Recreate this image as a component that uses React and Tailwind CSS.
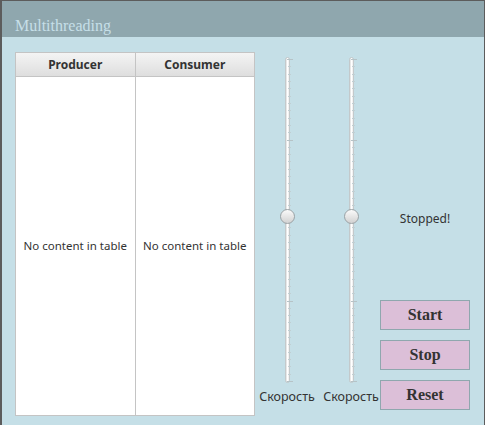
import React from "react";

const TRACK_H = 326;

function Ticks() {
  const marks = [];
  const major = 80.5;
  for (let m = 0; m < 4; m++) {
    for (let i = 0; i < 11; i++) {
      const y = 2 + m * major + (i * major) / 11;
      marks.push({ y, major: i === 0 });
    }
  }
  marks.push({ y: 2 + 4 * major, major: true });
  return (
    <svg width="8" height={TRACK_H} className="absolute left-[12px] top-0">
      {marks.map((t, i) => (
        <line
          key={i}
          x1={t.major ? 0 : 1}
          x2={t.major ? 6 : 4}
          y1={Math.round(t.y) + 0.5}
          y2={Math.round(t.y) + 0.5}
          stroke={t.major ? "#b6c3c7" : "#c0cfd3"}
          strokeWidth="1"
        />
      ))}
    </svg>
  );
}

function Slider({ label }) {
  return (
    <div className="flex flex-col items-center">
      <div className="relative mt-[5px] w-[24px] h-[326px]">
        <div className="absolute left-[10px] top-0 w-[5px] h-full rounded-full border border-[#c3c9cb] bg-gradient-to-r from-[#dcdcdc] via-white to-[#ececec]" />
        <Ticks />
        <div className="absolute left-[5px] top-[152px] w-[15px] h-[15px] rounded-full border border-[#9aa2a5] bg-gradient-to-b from-[#fafafa] to-[#d2d2d2]" />
      </div>
      <div className="mt-[6px] text-[12.5px] leading-[16px] text-[#333]">{label}</div>
    </div>
  );
}

function Column({ title }) {
  return (
    <div className="flex flex-col flex-1 border-r border-[#c4c4c4] last:border-r-0">
      <div className="h-[24px] flex items-center justify-center border-b border-[#c4c4c4] bg-gradient-to-b from-[#f4f4f4] to-[#dedede] text-[12px] font-bold text-[#333]">
        {title}
      </div>
      <div className="flex-1 flex items-center justify-center text-[11.5px] text-[#333] bg-white">
        No content in table
      </div>
    </div>
  );
}

function Btn({ children }) {
  return (
    <button className="w-[90px] h-[30px] bg-[#dcbfd8] border border-[#8fa7ae] text-[16px] font-bold text-[#333] font-['Liberation_Serif',serif]">
      {children}
    </button>
  );
}

export default function App() {
  return (
    <div className="w-[485px] h-[425px] flex flex-col border-l-2 border-t border-r border-[#5c5c5c] bg-[#c5dfe7] font-['Noto_Sans',sans-serif] overflow-hidden">
      <div className="h-[36px] shrink-0 bg-[#8fa7ae] flex items-center pl-[13px] pt-[13px] text-[16px] text-[#c6dfe8] font-['Liberation_Serif',serif]">
        Multithreading
      </div>
      <div className="flex pt-[15px] pl-[13px]">
        <div className="w-[240px] h-[364px] flex border border-[#c4c4c4] bg-white">
          <Column title="Producer" />
          <Column title="Consumer" />
        </div>
        <div className="flex ml-[1px] gap-[4px]">
          <div className="w-[62px] flex justify-center">
            <Slider label="Скорость" />
          </div>
          <div className="w-[58px] flex justify-center">
            <Slider label="Скорость" />
          </div>
        </div>
        <div className="flex flex-col w-[90px]">
          <div className="h-[248px] flex items-center justify-center pt-[86px] text-[12px] text-[#333]">
            Stopped!
          </div>
          <div className="flex flex-col gap-[10px]">
            <Btn>Start</Btn>
            <Btn>Stop</Btn>
            <Btn>Reset</Btn>
          </div>
        </div>
      </div>
    </div>
  );
}
